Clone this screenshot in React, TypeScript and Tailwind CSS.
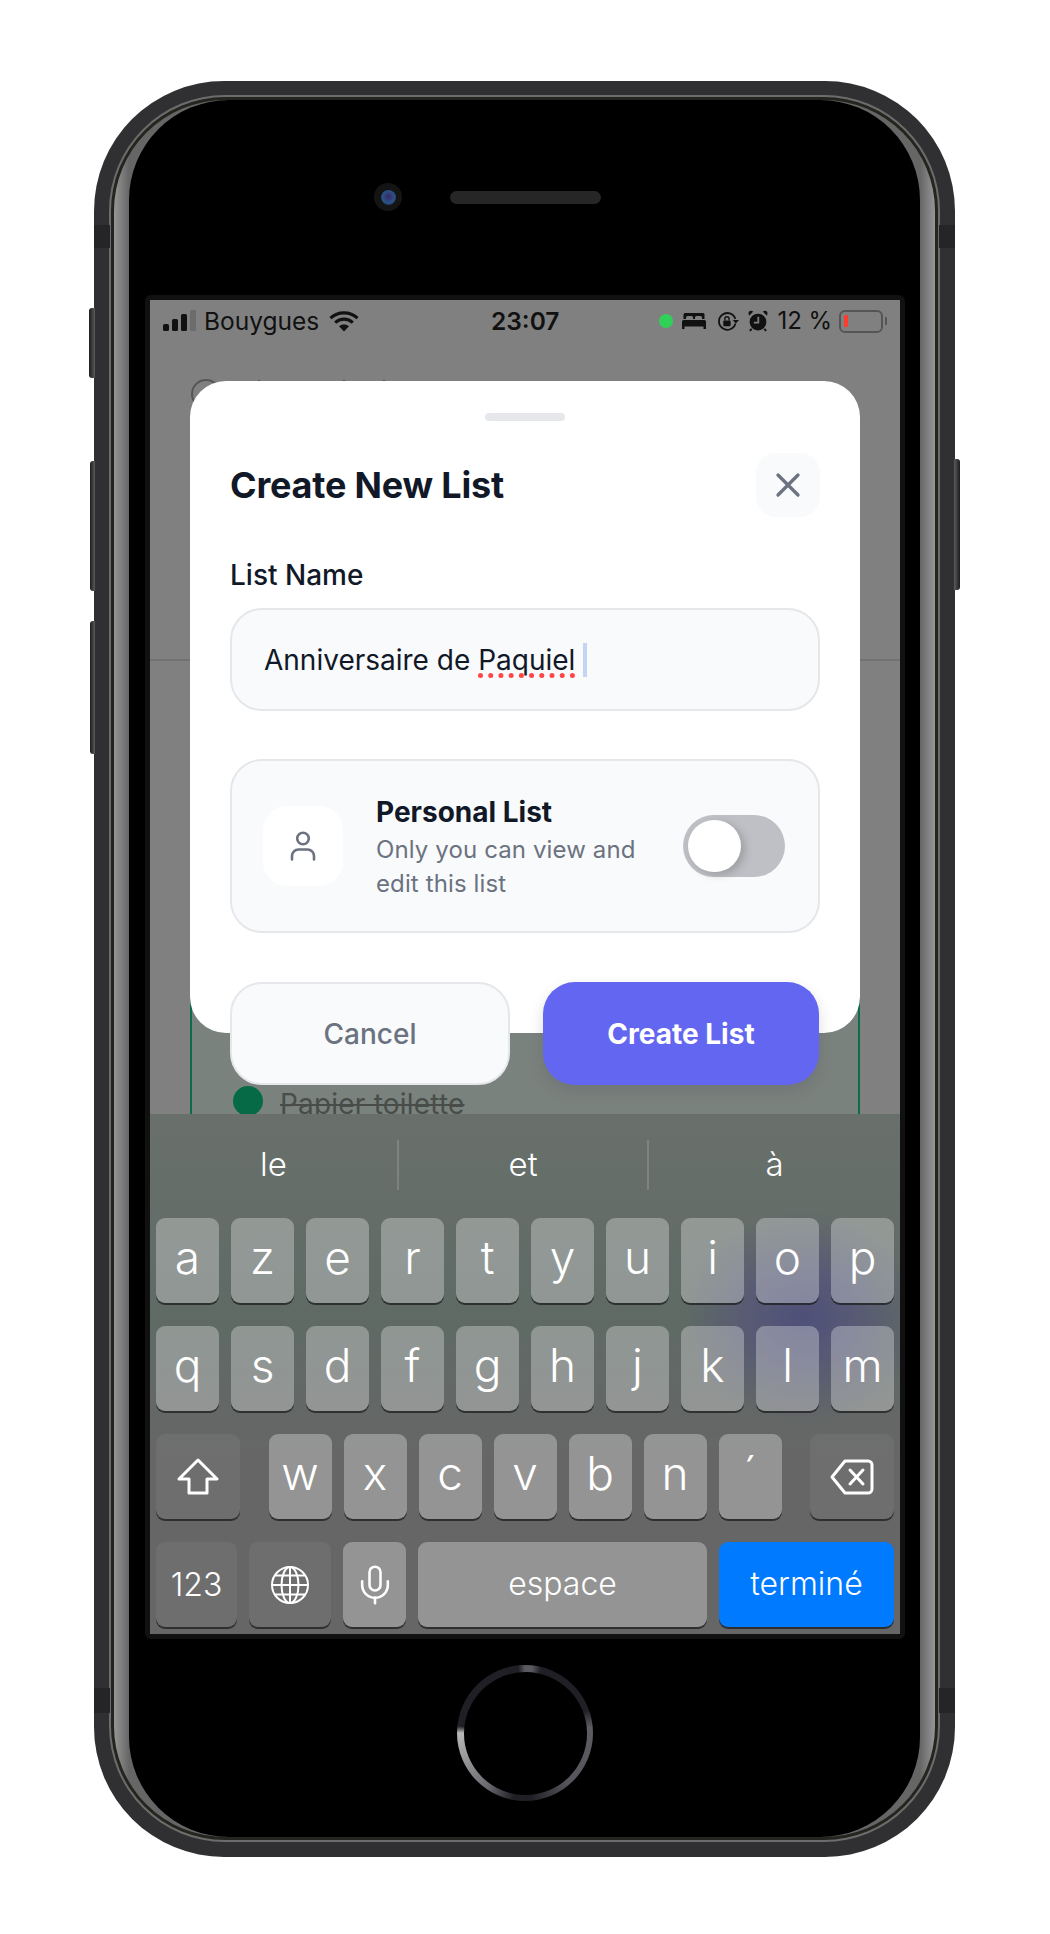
import { Mic, X } from "lucide-react";

const FONT = "font-['Inter','Noto_Sans',sans-serif]";

function LetterKey({ label, className = "" }: { label: string; className?: string }) {
  return (
    <div
      className={`flex h-[85px] w-[63px] items-center justify-center rounded-[9px] bg-white/30 pb-[8px] text-[46px] font-light leading-none text-white shadow-[0_2px_0_rgba(30,30,30,0.75)] ${className}`}
    >
      {label}
    </div>
  );
}

function SignalBars() {
  return (
    <svg width="34" height="23" viewBox="0 0 34 23">
      <rect x="0" y="14" width="6" height="7" rx="1.5" fill="#111" />
      <rect x="9" y="9" width="6" height="12" rx="1.5" fill="#111" />
      <rect x="18" y="4" width="6" height="17" rx="1.5" fill="#111" />
      <rect x="27" y="0" width="6" height="21" rx="1" fill="#6c6c6c" />
    </svg>
  );
}

function Wifi() {
  return (
    <svg width="30" height="22" viewBox="0 0 30 22" fill="none" stroke="#111" strokeWidth="3.2">
      <path d="M1.5 8.2C9 1 21 1 28.5 8.2" />
      <path d="M6.2 12.6C11.2 8 18.8 8 23.8 12.6" />
      <path d="M15 21.5l-5-5.2c2.8-2.4 7.2-2.4 10 0z" fill="#111" stroke="none" />
    </svg>
  );
}

function Bed() {
  return (
    <svg width="24" height="16" viewBox="0 0 24 16" fill="#111">
      <path d="M3 0h18a1.5 1.5 0 0 1 1.5 1.5V6H20V4.5A1.5 1.5 0 0 0 18.5 3h-4A1.5 1.5 0 0 0 13 4.5V6h-2V4.5A1.5 1.5 0 0 0 9.500 3h-4A1.500 1.500 0 0 0 4 4.500V6H1.500V1.500A1.500 1.500 0 0 1 3 0z" />
      <path d="M1.500 7h21A1.500 1.500 0 0 1 24 8.500V16h-2.500v-2.500h-19V16H0V8.500A1.500 1.500 0 0 1 1.500 7z" />
    </svg>
  );
}

function RotationLock() {
  return (
    <svg width="22" height="19" viewBox="0 0 21 18" fill="none">
      <path d="M17.500 6.500A8 8 0 1 0 17.600 11" stroke="#111" strokeWidth="1.700" />
      <path d="M15 7.500h6l-3 3.500z" fill="#111" />
      <rect x="6" y="8" width="7" height="5.500" rx="1" fill="#111" />
      <path d="M7.500 8V6.500a2 2 0 0 1 4 0V8" stroke="#111" strokeWidth="1.300" />
    </svg>
  );
}

function Alarm() {
  return (
    <svg width="20" height="22" viewBox="0 0 19 21">
      <circle cx="9.500" cy="11.500" r="8" fill="#111" />
      <path d="M1 5.500L5 1.500 3 .8A2.500 2.500 0 0 0 .5 3.500z" fill="#111" />
      <path d="M18 5.500L14 1.500l2-.7a2.500 2.500 0 0 1 2.500 2.700z" fill="#111" />
      <path d="M3.500 18l-1.800 2M15.500 18l1.800 2" stroke="#111" strokeWidth="1.800" />
      <path d="M9.800 6.500v5.500H5.500" fill="none" stroke="#808080" strokeWidth="1.700" />
    </svg>
  );
}

function StatusBar() {
  return (
    <div className="flex h-[42px] items-center text-[#111]">
      <div className="flex w-[341px] items-center pl-[13px]">
        <SignalBars />
        <span className="ml-[7px] text-[24.500px] leading-none">Bouygues</span>
        <span className="ml-[10px]">
          <Wifi />
        </span>
      </div>
      <span className="text-[24.500px] font-semibold leading-none">23:07</span>
      <div className="ml-[100px] h-[14px] w-[14px] rounded-full bg-[#30d158]" />
      <span className="ml-[9px] flex">
        <Bed />
      </span>
      <span className="ml-[11px] flex">
        <RotationLock />
      </span>
      <span className="ml-[9px] flex">
        <Alarm />
      </span>
      <span className="ml-[9px] text-[24px] leading-none">12 %</span>
      <div className="ml-[7px] flex h-[23px] w-[44px] items-center rounded-[6px] border-2 border-[#555] pl-[3px]">
        <div className="h-[12px] w-[4px] rounded-[1px] bg-[#ff3b30]" />
      </div>
      <div className="ml-[2px] h-[8px] w-[2px] rounded-r-[1px] bg-[#555]" />
    </div>
  );
}

function BehindModal() {
  return (
    <div className="flex-1 overflow-hidden">
      <div className="flex h-[319px] items-start border-b-2 border-[#727272] pl-[41px] pt-[37px]">
        <div className="h-[30px] w-[30px] rounded-full border-2 border-[#555]" />
        <div className="ml-[37px] mt-[1px] h-[3px] w-[2px] bg-[#555]" />
        <div className="ml-[83px] mt-[1px] h-[3px] w-[2px] bg-[#555]" />
        <div className="ml-[38px] mt-[1px] h-[3px] w-[2px] bg-[#555]" />
      </div>
      <div className="mx-[40px] mt-[40px] flex h-[430px] flex-col justify-end border-x-2 border-[#0b6b4a] bg-[#7a827d] pb-[12px] pl-[41px]">
        <div className="flex items-center gap-[17px]">
          <div className="h-[30px] w-[30px] rounded-full bg-[#066a46]" />
          <span className="relative top-[3px] text-[28px] leading-[36px] tracking-[0.2px] text-[#484d4a] line-through">
            Papier toilette
          </span>
        </div>
      </div>
    </div>
  );
}

function Modal() {
  return (
    <div className="absolute left-[40px] top-[81px] h-[652px] w-[670px] rounded-[36px] bg-white px-[40px] pt-[32px]">
      <div className="mx-auto h-[8px] w-[80px] rounded-full bg-[#e5e7eb]" />

      <div className="mt-[32px] flex items-center justify-between">
        <h2 className="text-[36px] font-bold leading-none tracking-[-0.2px] text-[#111827]">Create New List</h2>
        <button className="flex h-[64px] w-[64px] items-center justify-center rounded-[20px] bg-[#f9fafb] text-[#6b7280]">
          <X size={40} strokeWidth={2} />
        </button>
      </div>

      <label className="mt-[38px] block text-[28px] font-medium leading-[40px] text-[#111827]">List Name</label>
      <div className="mt-[13px] flex h-[103px] items-center rounded-[32px] border-2 border-[#e5e7eb] bg-[#f9fafb] pl-[32px] text-[28px] text-[#111827]">
        <span>
          Anniversaire de{" "}
          <span className="underline decoration-[#ff4545] decoration-dotted decoration-[5px] underline-offset-[3px] [text-decoration-skip-ink:none]">
            Paquiel
          </span>
        </span>
        <span className="ml-[8px] h-[34px] w-[4px] bg-[#c3d4f5]" />
      </div>

      <div className="mt-[48px] flex h-[174px] items-center rounded-[32px] border-2 border-[#e5e7eb] bg-[#f9fafb] pl-[31px] pr-[32px]">
        <div className="flex h-[80px] w-[80px] shrink-0 items-center justify-center rounded-[24px] bg-white">
          <svg width="26" height="30" viewBox="0 0 26 30" fill="none" stroke="#6b7280" strokeWidth="2.600" strokeLinecap="round">
            <circle cx="13" cy="7.500" r="5.800" />
            <path d="M2 28.500V25A6.500 6.500 0 0 1 8.500 18.500H17.500A6.500 6.500 0 0 1 24 25V28.500" />
          </svg>
        </div>
        <div className="ml-[33px] w-[307px]">
          <div className="text-[28px] font-bold leading-[40px] text-[#111827]">Personal List</div>
          <div className="mt-[1px] text-[24px] leading-[34px] tracking-[0.12px] text-[#6b7280]">
            Only you can view and
            <br />
            edit this list
          </div>
        </div>
        <div className="flex h-[62px] w-[102px] shrink-0 items-center rounded-full bg-[#bfc0c5] pl-[5px]">
          <div className="h-[52px] w-[53px] rounded-full bg-white shadow-[4px_3px_8px_rgba(0,0,0,0.18)]" />
        </div>
      </div>

      <div className="mt-[49px] flex gap-[33px]">
        <button className="h-[103px] w-[280px] rounded-[32px] border-2 border-[#e5e7eb] bg-[#f9fafb] text-[28px] font-medium text-[#6b7280]">
          Cancel
        </button>
        <button className="h-[103px] w-[276px] rounded-[32px] bg-[#6366f1] text-[28px] font-bold text-white shadow-[0_6px_14px_rgba(60,60,90,0.18)]">
          Create List
        </button>
      </div>
    </div>
  );
}

function Keyboard() {
  return (
    <div className="h-[520px] bg-[radial-gradient(ellipse_120px_105px_at_653px_203px,#4e5079_0%,rgba(84,84,122,0.7)_45%,rgba(102,102,102,0)_100%),linear-gradient(180deg,#69706c_0%,#5f6a65_40%,#666666_66%,#666666_100%)] px-[6px]">
      <div className="-mx-[6px] flex h-[104px] items-center pb-[2px] text-[33px] font-light text-white">
        <div className="flex h-[50px] w-[249px] items-center justify-center border-r-2 border-white/15">le</div>
        <div className="flex h-[50px] w-[250px] items-center justify-center border-r-2 border-white/15">et</div>
        <div className="flex h-[50px] flex-1 items-center justify-center">à</div>
      </div>

      <div className="flex gap-[12px]">
        {["a", "z", "e", "r", "t", "y", "u", "i", "o", "p"].map((k) => (
          <LetterKey key={k} label={k} />
        ))}
      </div>

      <div className="mt-[23px] flex gap-[12px]">
        {["q", "s", "d", "f", "g", "h", "j", "k", "l", "m"].map((k) => (
          <LetterKey key={k} label={k} />
        ))}
      </div>

      <div className="mt-[23px] flex justify-between">
        <div className="flex h-[85px] w-[84px] items-center justify-center rounded-[9px] bg-white/5 shadow-[0_2px_0_rgba(30,30,30,0.75)]">
          <svg width="42" height="37" viewBox="0 0 42 37" fill="none" stroke="#fff" strokeWidth="3" strokeLinejoin="round">
            <path d="M21 2L40 21H30V35H12V21H2Z" />
          </svg>
        </div>
        <div className="flex gap-[12px]">
          {["w", "x", "c", "v", "b", "n", "´"].map((k) => (
            <LetterKey key={k} label={k} />
          ))}
        </div>
        <div className="flex h-[85px] w-[84px] items-center justify-center rounded-[9px] bg-white/5 shadow-[0_2px_0_rgba(30,30,30,0.75)]">
          <svg width="44" height="36" viewBox="0 0 44 36" fill="none" stroke="#fff" strokeWidth="3" strokeLinejoin="round" strokeLinecap="round">
            <path d="M15 2H38A4 4 0 0 1 42 6V30A4 4 0 0 1 38 34H15L2 18Z" />
            <path d="M20 11L33 25M33 11L20 25" />
          </svg>
        </div>
      </div>

      <div className="mt-[23px] flex gap-[12px] text-[32px] font-light text-white">
        <div className="flex h-[85px] w-[81px] items-center justify-center rounded-[9px] bg-white/5 shadow-[0_2px_0_rgba(30,30,30,0.75)]">
          123
        </div>
        <div className="flex h-[85px] w-[82px] items-center justify-center rounded-[9px] bg-white/5 shadow-[0_2px_0_rgba(30,30,30,0.75)]">
          <svg width="40" height="40" viewBox="0 0 40 40" fill="none" stroke="#fff" strokeWidth="2">
            <circle cx="20" cy="20" r="18" />
            <ellipse cx="20" cy="20" rx="8.500" ry="18" />
            <path d="M20 2V38M2 20H38M5 10.500H35M5 29.500H35" />
          </svg>
        </div>
        <div className="flex h-[85px] w-[63px] items-center justify-center rounded-[9px] bg-white/30 shadow-[0_2px_0_rgba(30,30,30,0.75)]">
          <Mic size={44} strokeWidth={1.4} />
        </div>
        <div className="flex h-[85px] w-[289px] items-center justify-center rounded-[9px] bg-white/30 pb-[2px] shadow-[0_2px_0_rgba(30,30,30,0.75)]">
          espace
        </div>
        <div className="flex h-[85px] flex-1 items-center justify-center rounded-[9px] bg-[#007aff] pb-[2px] shadow-[0_2px_0_rgba(30,30,30,0.75)]">
          terminé
        </div>
      </div>
    </div>
  );
}

export default function App() {
  return (
    <div className={`h-[1934px] w-[1050px] bg-white pl-[94px] pt-[81px] ${FONT}`}>
      <div className="relative h-[1776px] w-[861px] rounded-[130px] bg-[#303032] px-[15px] pb-[15px] pt-[14px]">
        {/* side buttons and antenna bands */}
        <div className="absolute -left-[5px] top-[227px] h-[70px] w-[6px] rounded-l-[3px] bg-gradient-to-r from-[#1d1d1d] to-[#5c5c5c]" />
        <div className="absolute -left-[4px] top-[380px] h-[130px] w-[5px] rounded-l-[3px] bg-gradient-to-r from-[#1d1d1d] to-[#5c5c5c]" />
        <div className="absolute -left-[4px] top-[540px] h-[133px] w-[5px] rounded-l-[3px] bg-gradient-to-r from-[#1d1d1d] to-[#5c5c5c]" />
        <div className="absolute -right-[5px] top-[378px] h-[131px] w-[6px] rounded-r-[3px] bg-gradient-to-l from-[#1d1d1d] to-[#5c5c5c]" />
        <div className="absolute left-0 top-[144px] h-[23px] w-[16px] bg-[#252527]" />
        <div className="absolute right-0 top-[144px] h-[23px] w-[16px] bg-[#252527]" />
        <div className="absolute bottom-[144px] left-0 h-[25px] w-[16px] bg-[#252527]" />
        <div className="absolute bottom-[144px] right-0 h-[25px] w-[16px] bg-[#252527]" />

        <div className="h-full rounded-[116px] bg-[#6c6c6c] p-[2px]">
          <div className="h-full rounded-[114px] bg-[#25251f] p-[3px]">
            <div className="h-full rounded-[111px] bg-[linear-gradient(90deg,#969696,#666666_15px,#666666_calc(100%-15px),#969696)] px-[15px]">
              <div className="h-full rounded-[100px] bg-black">
                <div className="flex h-[195px] items-start pl-[245px] pt-[83px]">
                  <div className="flex h-[28px] w-[28px] items-center justify-center rounded-full bg-[#141414]">
                    <div className="h-[15px] w-[15px] rounded-full bg-[radial-gradient(circle_at_50%_45%,#3a2768_0%,#2a5384_55%,#161d30_100%)]" />
                  </div>
                  <div className="ml-[48px] mt-[8px] h-[13px] w-[151px] rounded-full bg-[#262626]" />
                </div>

                <div className="ml-[16px] h-[1344px] w-[760px] rounded-[6px] bg-[#111] p-[5px]">
                  <div className="relative flex h-[1334px] w-[750px] flex-col bg-[#808080]">
                    <StatusBar />
                    <BehindModal />
                    <Keyboard />
                    <Modal />
                  </div>
                </div>

                <div className="ml-[328px] mt-[26px] flex h-[136px] w-[136px] items-center justify-center rounded-full bg-[conic-gradient(#5a5a60_0deg,#5a5a60_6deg,#1f1f25_14deg,#1f1f25_70deg,#5c5c62_85deg,#55555c_140deg,#1f1f25_175deg,#1f1f25_190deg,#6a6a70_215deg,#b8b8b8_270deg,#1f1f25_276deg,#1f1f25_354deg,#5a5a60_360deg)]">
                  <div className="h-[123px] w-[123px] rounded-full bg-black" />
                </div>
              </div>
            </div>
          </div>
        </div>
      </div>
    </div>
  );
}
